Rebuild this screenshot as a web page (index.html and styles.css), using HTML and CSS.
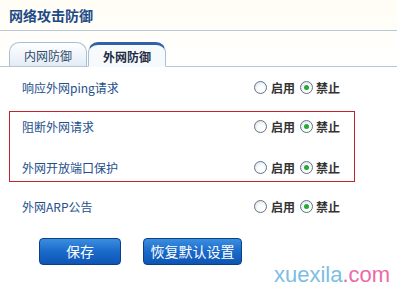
FILE: index.html
```html
<!DOCTYPE html>
<html>
<head>
<meta charset="utf-8">
<link rel="stylesheet" href="styles.css">
</head>
<body>
<div class="page">
  <div class="title">网络攻击防御</div>
  <div class="tabs">
    <div class="tab">内网防御</div>
    <div class="tab active">外网防御</div>
  </div>
  <div class="row">
    <div class="label">响应外网ping请求</div>
    <div class="radios">
      <span class="radio"></span><span class="opt">启用</span>
      <span class="radio checked"></span><span class="opt">禁止</span>
    </div>
  </div>
  <div class="box">
    <div class="row in-box">
      <div class="label">阻断外网请求</div>
      <div class="radios">
        <span class="radio"></span><span class="opt">启用</span>
        <span class="radio checked"></span><span class="opt">禁止</span>
      </div>
    </div>
    <div class="row in-box">
      <div class="label">外网开放端口保护</div>
      <div class="radios">
        <span class="radio"></span><span class="opt">启用</span>
        <span class="radio checked"></span><span class="opt">禁止</span>
      </div>
    </div>
  </div>
  <div class="row last">
    <div class="label">外网ARP公告</div>
    <div class="radios">
      <span class="radio"></span><span class="opt">启用</span>
      <span class="radio checked"></span><span class="opt">禁止</span>
    </div>
  </div>
  <div class="buttons">
    <button class="btn save">保存</button>
    <button class="btn reset">恢复默认设置</button>
  </div>
  <div class="watermark"><span class="wm-blue">xuexila</span><span class="wm-pink">.com</span></div>
</div>
</body>
</html>
```
FILE: styles.css
```css
html, body {
  margin: 0;
  padding: 0;
  background: #ffffff;
}
body {
  font-family: "Microsoft YaHei", "Noto Sans CJK SC", "Noto Sans", sans-serif;
  font-size: 12px;
  width: 397px;
  height: 288px;
  overflow: hidden;
}
.page {
  position: relative;
  width: 397px;
  height: 288px;
  background: linear-gradient(#fffdf4 0px, #ffffff 70px);
}
.title {
  height: 30px;
  line-height: 30px;
  padding-left: 9px;
  font-size: 14px;
  font-weight: bold;
  color: #1d4a86;
  border-bottom: 1px solid #b7c7d6;
}
.tabs {
  display: flex;
  align-items: flex-end;
  margin-top: 10px;
  padding-left: 9px;
  height: 25px;
  border-bottom: 1px solid #b7c7d6;
}
.tab {
  box-sizing: border-box;
  height: 25px;
  width: 78px;
  margin-right: 1px;
  margin-bottom: -1px;
  text-align: center;
  line-height: 24px;
  padding-top: 1px;
  color: #2f4a6a;
  border: 1px solid #a9bfd4;
  border-bottom: 1px solid #b7c7d6;
  border-radius: 10px 10px 0 0;
  background: linear-gradient(#ffffff, #e2ecf6);
}
.tab.active {
  color: #1c2c44;
  font-weight: bold;
  background: #f7fafd;
  border-top: 3px solid #2f62a6;
  border-bottom-color: #f7fafd;
  line-height: 22px;
}
.row {
  display: flex;
  align-items: center;
  height: 40px;
  padding-left: 22px;
}
.label {
  width: 232px;
  color: #244f8c;
}
.box {
  margin: 4px 0 0 9px;
  width: 344px;
  border: 1px solid #c0252d;
  display: flex;
  flex-direction: column;
  gap: 13px;
}
.row.in-box {
  height: 28px;
  padding-left: 12px;
}
.row.last {
  margin-top: 4px;
}
.radios {
  display: flex;
  align-items: center;
}
.radio {
  box-sizing: border-box;
  width: 13px;
  height: 13px;
  border-radius: 50%;
  border: 1px solid #5f7388;
  background: radial-gradient(circle at 60% 65%, #ffffff 30%, #d6dde4 100%);
  display: flex;
  align-items: center;
  justify-content: center;
}
.radio.checked::after {
  content: "";
  width: 5px;
  height: 5px;
  border-radius: 50%;
  background: #27a733;
}
.opt {
  color: #333333;
  font-weight: bold;
  margin-left: 4px;
  margin-right: 5px;
}
.opt:last-child {
  margin-left: 3px;
}
.buttons {
  display: flex;
  gap: 22px;
  margin-top: 12px;
  padding-left: 39px;
}
.btn {
  box-sizing: border-box;
  height: 27px;
  border: 1px solid #0d3f85;
  border-radius: 4px;
  background: linear-gradient(#3b8ee0 0%, #1a6acb 50%, #0d55b4 100%);
  color: #ffffff;
  font-family: "Microsoft YaHei", "Noto Sans CJK SC", sans-serif;
  font-size: 14px;
  padding: 0;
  line-height: 25px;
}
.btn.save {
  width: 82px;
}
.btn.reset {
  width: 99px;
}
.watermark {
  position: absolute;
  left: 274px;
  top: 262px;
  font-family: "Liberation Sans", Arial, sans-serif;
  font-size: 22px;
  line-height: 26px;
}
.wm-blue {
  color: #7cbde2;
}
.wm-pink {
  color: #ec6ba6;
}
```
